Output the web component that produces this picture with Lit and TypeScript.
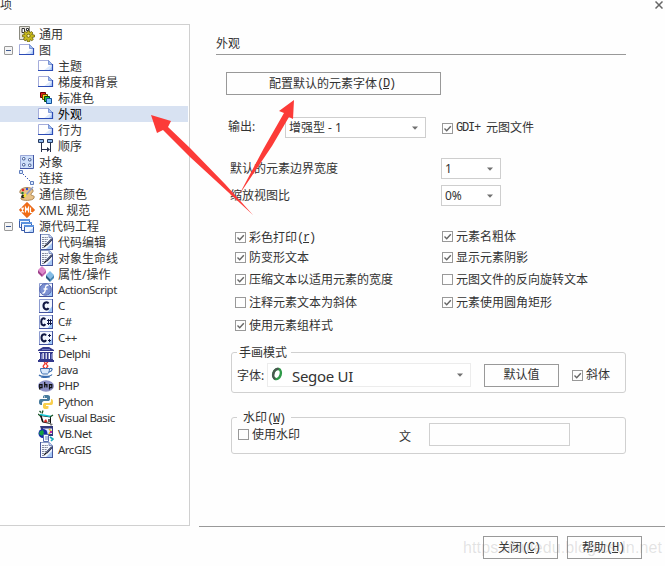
import { LitElement, html, svg, css, nothing } from "lit";
import { customElement, property } from "lit/decorators.js";
import { classMap } from "lit/directives/class-map.js";

const textDoc = svg`<path d="M2.500.5h9l3 3v12h-12z" fill="#f6f9ff" stroke="#8b9cc4"/><path d="M8 15h6V9z" fill="#a8c8f4"/><path d="M2.500 0v15.500H15M14.500 4v11" fill="none" stroke="#46569c"/><path d="M11 .5v3h3.500" fill="#c6d8f8" stroke="#6a79ad" stroke-width=".8"/><path d="M4 3.500h6M4 5.500h6M4 7.500h5M4 9.500h4M4 11.500h2M4 13.500h3" stroke="#83899c" stroke-dasharray="2 .6"/><path d="M14 5 8.500 10.800" stroke="#28304e" stroke-width="2"/><path d="M13.500 5 8.500 10.300" stroke="#8d98bd" stroke-width=".7"/><path d="M6.200 12.800l2.300-2" stroke="#111" stroke-width="1.300"/>`;
const tile = svg`<path d="M1 1h14v14H1z" fill="#f2f7ff"/><path d="M9 15h6V7z" fill="#9cc4f5"/><path d="M1.500 15V1.500H15" fill="none" stroke="#8c9bcf"/><path d="M1 14.500h14M14.500 1v14" fill="none" stroke="#42539f"/>`;

const icons: Record<string, unknown> = {
  gear: svg`<path d="M.5.500h10v13H.5z" fill="#e9e6df" stroke="#8b8a80"/><path d="M3 2.500h2.500v4H3zM7.500 2.500h2v2h-2z" fill="#fff" stroke="#333"/><path d="M8.500 5h2l.4 1.700L12.500 5.500 14 7l-1.200 1.500 2.700.5v2l-2.400.5 1.200 2-1.500 1.200-1.700-1.100-.6 2.400H8.500l-.5-2.300-2 1.200L4.500 13l1.300-1.800L3.500 10.800v-2l2.400-.3L4.700 6.800 6.200 5.500 8 6.700z" fill="#c8ba1c" stroke="#5e560b" stroke-width=".7"/><circle cx="9.500" cy="9.800" r="1.600" fill="#fff8b8" stroke="#5e560b" stroke-width=".8"/>`,
  page: svg`<path d="M.5 2.500H11l3.500 4v6.500H.5z" fill="#fff"/><path d="M5 13h9.500V5.500z" fill="#dce8fc"/><path d="M10 13h4.500V8z" fill="#b4cff8"/><path d="M.5 13V2.500H11" fill="none" stroke="#a5addb"/><path d="M10.500 2.500v4h4z" fill="#9cbcf0" stroke="#6c86cb" stroke-width=".8"/><path d="M0 12.500h14.500V6" fill="none" stroke="#2c4cb6" stroke-width="1.200"/>`,
  colors: svg`<path d="M2.500 2.500h5v5h-5z" fill="#e21b18" stroke="#600"/><path d="M4.500 4.500h5v5h-5z" fill="#ffd21f" stroke="#654900"/><path d="M6.500 6.500h5v5h-5z" fill="#20c33c" stroke="#064413"/><path d="M8.500 8.500h5v5h-5z" fill="#82c6ff" stroke="#124f97"/>`,
  sequence: svg`<path d="M.5 1.500h5v3h-5zM9.500 1.500h5v3h-5z" fill="#8fb9ed" stroke="#27395f"/><path d="M3.500 5v9M12.500 5v9M4 11.500h7" stroke="#252f4b"/><path d="M9 9l3 2.500L9 14z" fill="#252f4b"/>`,
  objects: svg`<path d="M1 1h14v14H1z" fill="#cfe0fb"/><path d="M1.500 15V1.500H15" fill="none" stroke="#9aa8d8"/><path d="M1 14.500h13.500V1" fill="none" stroke="#4357a4"/><g fill="#fff" stroke="#3b538f"><rect x="3.500" y="3.500" width="2.500" height="2.500" rx="1"/><rect x="9.500" y="4.500" width="2.500" height="2.500" rx="1"/><rect x="3.500" y="9.500" width="2.500" height="2.500" rx="1"/><rect x="9.500" y="10" width="2.500" height="2.500" rx="1"/></g>`,
  link: svg`<path d="M.5.5h3v3h-3zM11.500 11.500h3v3h-3z" fill="#dceaff" stroke="#5f7dbd"/><path d="M4 4l8 8" stroke="#334faf" stroke-dasharray="1.400 1.400"/>`,
  palette: svg`<path d="M1 5C2 1 12 0 14 4c1 3-3 3-2 5 1 1 4 0 3 3s-12 3-13 1 3-2 2-4-4-1-3-4z" fill="#e8c187" stroke="#9b7440" stroke-width=".8"/><circle cx="4" cy="4" r="1.300" fill="#e8202a"/><circle cx="8" cy="3" r="1.200" fill="#304cd4"/><circle cx="3.500" cy="7" r="1.200" fill="#207937"/><circle cx="4" cy="10.500" r="1.800" fill="#222"/><path d="M14 1 7 9" stroke="#8d9ac4" stroke-width="1.500"/><path d="M7 8l-2 3" stroke="#fce92d" stroke-width="2"/>`,
  xml: svg`<path d="M8 .3 15.700 8 8 15.700.3 8z" fill="#f26d13" stroke="#d94e05" stroke-width=".6"/><path d="M2.500 5.500l2 5m0-5-2 5M6.500 10.500v-5l1.500 2.500 1.500-2.500v5M11.500 5.500v5h2" fill="none" stroke="#fff" stroke-width="1.200"/>`,
  windows: svg`<g stroke="#385ba9" fill="#f4f9ff"><path d="M.5 1.500h10v8H.5z"/><path d="M2.500 4.500h10v8h-10z"/><path d="M5.500 7.500h9v7h-9z"/></g><path d="M0 2h11M2 5h11M5 8h10" stroke="#5c93df" stroke-width="2"/><path d="M9 14h5v-4z" fill="#b7d4fb"/>`,
  doc: textDoc,
  gems: svg`<path d="M4 0l4 4-4 4-4-4z" fill="#df88ca"/><path d="M0 4l4 4v3L0 7z" fill="#9e3f8a"/><path d="M4 8l4-4v3l-4 4z" fill="#bf5cab"/><path d="M12 5l4 4-4 4-4-4z" fill="#83bce6"/><path d="M8 9l4 4v3l-4-4z" fill="#235a83"/><path d="M12 13l4-4v3l-4 4z" fill="#4688b7"/>`,
  action: svg`${tile}<circle cx="7.500" cy="7.500" r="5.800" fill="#7c91d2" stroke="#5264ae"/><path d="M10.500 3.500c-3-1-3 2-3.200 4s-1 4-2.800 3.500M5.500 7h4" fill="none" stroke="#fff" stroke-width="1.400"/>`,
  c: svg`${tile}<path d="M10.500 5.500c-1-2-5-1.500-5 2.300s4 4.500 5 2.200" fill="none" stroke="#101843" stroke-width="2.100"/>`,
  csharp: svg`${tile}<path d="M7.200 5.500c-1-2-4-1.500-4 2.300s3 4.500 4 2.200" fill="none" stroke="#101843" stroke-width="2"/><path d="M10.500 5v6M12.500 5v6M9 6.500h5M9 9.500h5" stroke="#101843"/>`,
  cpp: svg`${tile}<path d="M8 5.500c-1-2-4.500-1.500-4.500 2.300s3.500 4.500 4.500 2.200" fill="none" stroke="#101843" stroke-width="2"/><path d="M10 5.500h3M11.500 4v3M10 10.500h3M11.500 9v3" stroke="#101843"/>`,
  temple: svg`<path d="M0 4l5-3h6l5 3v1H0zM1 6h14v1H1zM2 7h2.500v6H2zM5.800 7h1.800v6H5.800zM8.800 7h1.800v6H8.800zM12 7h2.500v6H12zM1 13h14v1H1zM0 14h16v2H0z" fill="#34398c"/><path d="M4 3.500h8M3.500 8v5M13.500 8v5" stroke="#7179c3"/>`,
  java: svg`<path d="M6 0q2 1 0 3t1 3M10 0Q7 2 9 3T8 6" fill="none" stroke="#ed3b2f" stroke-width="1.300"/><path d="M2.500 6.500h9c0 3-1 5-2 5.500h-5c-1-1-2-2.500-2-5.500z" fill="#d9e8fb" stroke="#3a6cae"/><path d="M11.500 6.500c4-1 3 3-.5 3.500M1 13c2 2 11 2 13-.5M3 14.800q5 1.200 9 0" fill="none" stroke="#3a6cae" stroke-width="1.200"/>`,
  php: svg`<ellipse cx="8" cy="8" rx="8" ry="5.800" fill="#8d91c6"/><path d="M1.700 11.500V6.500h2.300v3H2M6.700 4v5.500M6.700 6.500h2.200v3M11.500 11.500V6.500h2.300v3h-2.300" fill="none" stroke="#111" stroke-width="1.250"/>`,
  python: svg`<path d="M8 1c-3 0-3 1-3 3h4v1H3C1 5 1 7 1 8s0 3 3 3V9c0-1 1-2 2-2h4c1 0 2-.5 2-2V3c0-1.500-1-2-4-2z" fill="#477a9d"/><path d="M8 15c3 0 3-1 3-3H8v-1h5c2 0 2-2 2-3s0-3-2-3v2c0 1-1 2-2 2H7c-1 0-2 .5-2 2v2c0 1.500 1 2 3 2z" fill="#f9cf4c"/><path d="M6 3h1M10 13h1" stroke="#fff"/>`,
  vb: svg`<path d="M2.500 5.500l10 1.500v6.500l-8-1.500z" fill="#fff" stroke="#111"/><path d="M2 4.500l11 2" stroke="#17c8d5" stroke-width="1.500"/><path d="M0 4l3 2.500M4 3.500l1-3M3 2.500 1.500 1M12 7l3-2" stroke="#165325" stroke-width="1.300"/><path d="M6 11l2-2 1.500 3-3 .5z" fill="#d82b28"/><path d="M3 6l2 6M11 9v3" stroke="#111" stroke-width="1.300"/><path d="M11 13l4 1-2 2z" fill="#777"/>`,
  vbnet: svg`<path d="M2 0h13v10H5z" fill="#32387c"/><path d="M5 2.500h9V8H5z" fill="#e4ebff"/><circle cx="5" cy="7.500" r="4.500" fill="#152aa9"/><path d="M2 5l3-1 1 3-2 3-3-2z" fill="#13a142"/><path d="M5.500 8.500h5v7h-5z" fill="#f8fbff" stroke="#556cad"/><path d="M7 11h3M7 13h3" stroke="#6d82bb"/><path d="M11 3l2 2-2 3" fill="none" stroke="#e4bc20" stroke-width="1.600"/><path d="M12 11l3 2-2 2" stroke="#18a8ba" stroke-width="1.600" fill="none"/><path d="M12 6h2" stroke="#b9259f" stroke-width="2"/>`,
};

type Node = { icon: string; label: string; depth: number; open?: boolean; selected?: boolean; latin?: boolean };
const n = (icon: string, label: string, depth: number, rest: Partial<Node> = {}): Node => ({ icon, label, depth, ...rest });
const nodes: Node[] = [
  n("gear", "通用", 0), n("page", "图", 0, { open: true }), n("page", "主题", 1), n("page", "梯度和背景", 1),
  n("colors", "标准色", 1), n("page", "外观", 1, { selected: true }), n("page", "行为", 1), n("sequence", "顺序", 1),
  n("objects", "对象", 0), n("link", "连接", 0), n("palette", "通信颜色", 0), n("xml", "XML 规范", 0),
  n("windows", "源代码工程", 0, { open: true }), n("doc", "代码编辑", 1), n("doc", "对象生命线", 1),
  n("gems", "属性/操作", 1), n("action", "ActionScript", 1, { latin: true }), n("c", "C", 1, { latin: true }),
  n("csharp", "C#", 1, { latin: true }), n("cpp", "C++", 1, { latin: true }), n("temple", "Delphi", 1, { latin: true }),
  n("java", "Java", 1, { latin: true }), n("php", "PHP", 1, { latin: true }), n("python", "Python", 1, { latin: true }),
  n("vb", "Visual Basic", 1, { latin: true }), n("vbnet", "VB.Net", 1, { latin: true }), n("doc", "ArcGIS", 1, { latin: true }),
];

@customElement("check-item")
class CheckItem extends LitElement {
  @property({ type: Boolean }) checked = false;
  static styles = css`
    :host { display: flex; align-items: center; height: 11px; white-space: pre; line-height: 16px; }
    .box { box-sizing: border-box; width: 11px; height: 11px; border: 1px solid #999; flex: none; margin-right: 3px; }
    svg { display: block; }
  `;
  render() {
    return html`<span class="box">${this.checked ? html`<svg width="9" height="9"><path d="M1.500 4.500 3.700 6.700 7.800 2.200" fill="none" stroke="#666" stroke-width="1.400"/></svg>` : nothing}</span><slot></slot>`;
  }
}

@customElement("drop-down")
class DropDown extends LitElement {
  static styles = css`
    :host { box-sizing: border-box; display: flex; align-items: center; height: 21px; border: 1px solid #cecece; padding: 0 7px 0 3px; background: #fff; white-space: pre; }
    .label { flex: 1; display: flex; align-items: center; }
    svg { flex: none; }
  `;
  render() {
    return html`<span class="label"><slot></slot></span><svg width="6" height="4"><path d="M0 .5h6L3 3.800z" fill="#707070"/></svg>`;
  }
}

@customElement("nav-tree")
class NavTree extends LitElement {
  static styles = css`
    :host { box-sizing: border-box; display: block; width: 190px; height: 502px; border: 1px solid #d0d0d0; border-left: 0; padding: 1px 1px 0 0; background: #fff; }
    .row { display: flex; align-items: center; height: 16px; line-height: 16px; white-space: pre; }
    .selected { background: #d8e2f2; color: #000; }
    .toggle { box-sizing: border-box; width: 9px; height: 9px; border: 1px solid #999; border-radius: 1px; margin: 0 6px 0 4px; flex: none; background: linear-gradient(#3e5a92, #3e5a92) center / 5px 1px no-repeat #f4f4f4; }
    .none { visibility: hidden; }
    .icon { width: 16px; height: 16px; flex: none; margin-right: 4px; }
    .child .icon { margin-left: 19px; }
    .text { padding-top: 1px; }
    .latin { padding-top: 0; font-size: 11.5px; letter-spacing: -0.5px; }
  `;
  render() {
    return nodes.map((d) => html`<div class=${classMap({ row: true, selected: !!d.selected, child: d.depth > 0 })}>
      <span class=${classMap({ toggle: true, none: !d.open })}></span><svg class="icon" viewBox="0 0 16 16">${icons[d.icon]}</svg><span class=${classMap({ text: true, latin: !!d.latin })}>${d.label}</span>
    </div>`);
  }
}

@customElement("app-root")
class AppRoot extends LitElement {
  static styles = css`
    :host { position: relative; display: block; width: 665px; height: 566px; overflow: hidden; background: #fefefe; color: #333; font: 12px/16px "Noto Sans", "Noto Sans CJK SC", sans-serif; }
    .titlebar { display: flex; justify-content: space-between; height: 24px; overflow: hidden; }
    .caption { margin: -3px 0 0 -12px; }
    .close { margin: 1px 2px 0 0; }
    .body { display: flex; }
    .pane { display: flex; flex-direction: column; align-items: flex-start; width: 475px; height: 502px; }
    .heading { box-sizing: border-box; width: 410px; height: 20px; margin: 11px 0 0 26px; padding-top: 1px; border-bottom: 1px solid #999; }
    .button { box-sizing: border-box; display: flex; align-items: center; justify-content: center; height: 23px; border: 1px solid #999; background: #fefefe; white-space: pre; }
    .fonts { width: 215px; margin: 17px 0 0 36px; padding-right: 3px; }
    .mono { font-family: "Liberation Mono", "Noto Sans CJK SC", monospace; font-size: 12px; letter-spacing: -1.2px; }
    .output { display: flex; align-items: center; margin: 22px 0 0 38px; height: 21px; }
    .output .name { width: 57px; margin-top: -2px; }
    .output drop-down { width: 141px; margin-right: 16px; }
    .output check-item { padding-top: 1px; }
    .setting { display: flex; align-items: center; height: 21px; margin-left: 40px; }
    .setting .name { width: 211px; padding-top: 1px; }
    .setting drop-down { width: 60px; }
    .first { margin-top: 20px; }
    .second { margin-top: 6px; }
    .checks { display: grid; grid-template-columns: 207px auto; grid-template-rows: 20px 22px 23px 23px 11px; margin: 26px 0 0 45px; }
    .raise { margin-top: -1px; }
    fieldset { box-sizing: border-box; min-width: 0; width: 395px; margin: 0 0 0 41px; padding: 0; border: 1px solid #d0d0d0; border-radius: 3px; }
    legend { box-sizing: border-box; height: 16px; width: 54px; margin-left: 5px; padding: 0 0 0 2px; line-height: 17px; white-space: pre; }
    .hand { height: 49px; margin-top: 13px; }
    .water { height: 45px; margin-top: 16px; }
    .water legend { padding-left: 6px; }
    .line { display: flex; align-items: center; padding-left: 5px; }
    .hand .line { height: 24px; margin-top: 3px; }
    .hand drop-down { width: 204px; height: 24px; border-color: #ececec; margin-right: 13px; }
    .fontlabel { width: 30px; padding-top: 2px; }
    .face { padding-top: 2px; font: 15px/20px "Noto Sans", sans-serif; letter-spacing: -0.3px; }
    .glyph { margin: 0 7px 0 0; }
    .default { width: 75px; margin-right: 13px; }
    .water .line { height: 23px; margin-top: -2px; padding-left: 6px; }
    .use { width: 161px; }
    .wen { width: 30px; padding-top: 5px; }
    .field { box-sizing: border-box; width: 141px; height: 23px; border: 1px solid #d0d0d0; }
    .footer { box-sizing: border-box; display: flex; justify-content: flex-end; gap: 9px; height: 40px; margin-left: 199px; padding: 9px 23px 0 0; border-top: 1px solid #999; }
    .footer .button { width: 75px; padding-right: 3px; }
    .arrows { position: absolute; left: 0; top: 0; }
    .mark { position: absolute; left: 463px; top: 538px; font: 16px/20px "Liberation Sans", sans-serif; letter-spacing: .12px; color: rgba(130, 130, 130, .22); white-space: pre; }
  `;
  render() {
    return html`
      <div class="titlebar"><span class="caption">选项</span><svg class="close" width="8" height="8"><path d="M.5.5l7 7m0-7-7 7" stroke="#666" stroke-width="1.500"/></svg></div>
      <div class="body">
        <nav-tree></nav-tree>
        <div class="pane">
          <div class="heading">外观</div>
          <div class="button fonts">配置默认的元素字体<span class="mono">(<u>D</u>)</span></div>
          <div class="output"><span class="name">输出:</span><drop-down>增强型 - 1</drop-down><check-item checked><span class="mono">GDI+ </span>元图文件</check-item></div>
          <div class="setting first"><span class="name">默认的元素边界宽度</span><drop-down>1</drop-down></div>
          <div class="setting second"><span class="name">缩放视图比</span><drop-down>0%</drop-down></div>
          <div class="checks">
            <check-item checked>彩色打印<span class="mono">(<u>r</u>)</span></check-item><check-item checked class="raise">元素名粗体</check-item>
            <check-item checked>防变形文本</check-item><check-item checked>显示元素阴影</check-item>
            <check-item checked>压缩文本以适用元素的宽度</check-item><check-item>元图文件的反向旋转文本</check-item>
            <check-item>注释元素文本为斜体</check-item><check-item checked>元素使用圆角矩形</check-item>
            <check-item checked>使用元素组样式</check-item>
          </div>
          <fieldset class="hand"><legend>手画模式</legend>
            <div class="line"><span class="fontlabel">字体:</span><drop-down><svg class="glyph" width="14" height="16" viewBox="0 0 14 16"><g transform="rotate(18 6 7)"><ellipse cx="6" cy="7" rx="3.700" ry="5.200" fill="none" stroke="#2e9a48" stroke-width="2.500"/><path d="M6 1.800C1.200 1.800 1.200 12.200 6 12.200" fill="none" stroke="#4b5550" stroke-width="2.200"/></g></svg><span class="face">Segoe UI</span></drop-down><div class="button default">默认值</div><check-item checked>斜体</check-item></div>
          </fieldset>
          <fieldset class="water"><legend>水印<span class="mono">(<u>W</u>)</span></legend>
            <div class="line"><check-item class="use">使用水印</check-item><span class="wen">文</span><div class="field"></div></div>
          </fieldset>
        </div>
      </div>
      <div class="footer"><div class="button">关闭<span class="mono">(<u>C</u>)</span></div><div class="button">帮助<span class="mono">(<u>H</u>)</span></div></div>
      <svg class="arrows" width="665" height="240"><path d="M151 115 171 121 168 127 190 148 225 184 253 215 190 157 163 130 157 133zM294 100 293 119 289 117 272 146 239 195 264 148 284 113 279 111z" fill="#fc3b38"/></svg>
      <div class="mark">https://huiedu.blog.csdn.net</div>
    `;
  }
}
